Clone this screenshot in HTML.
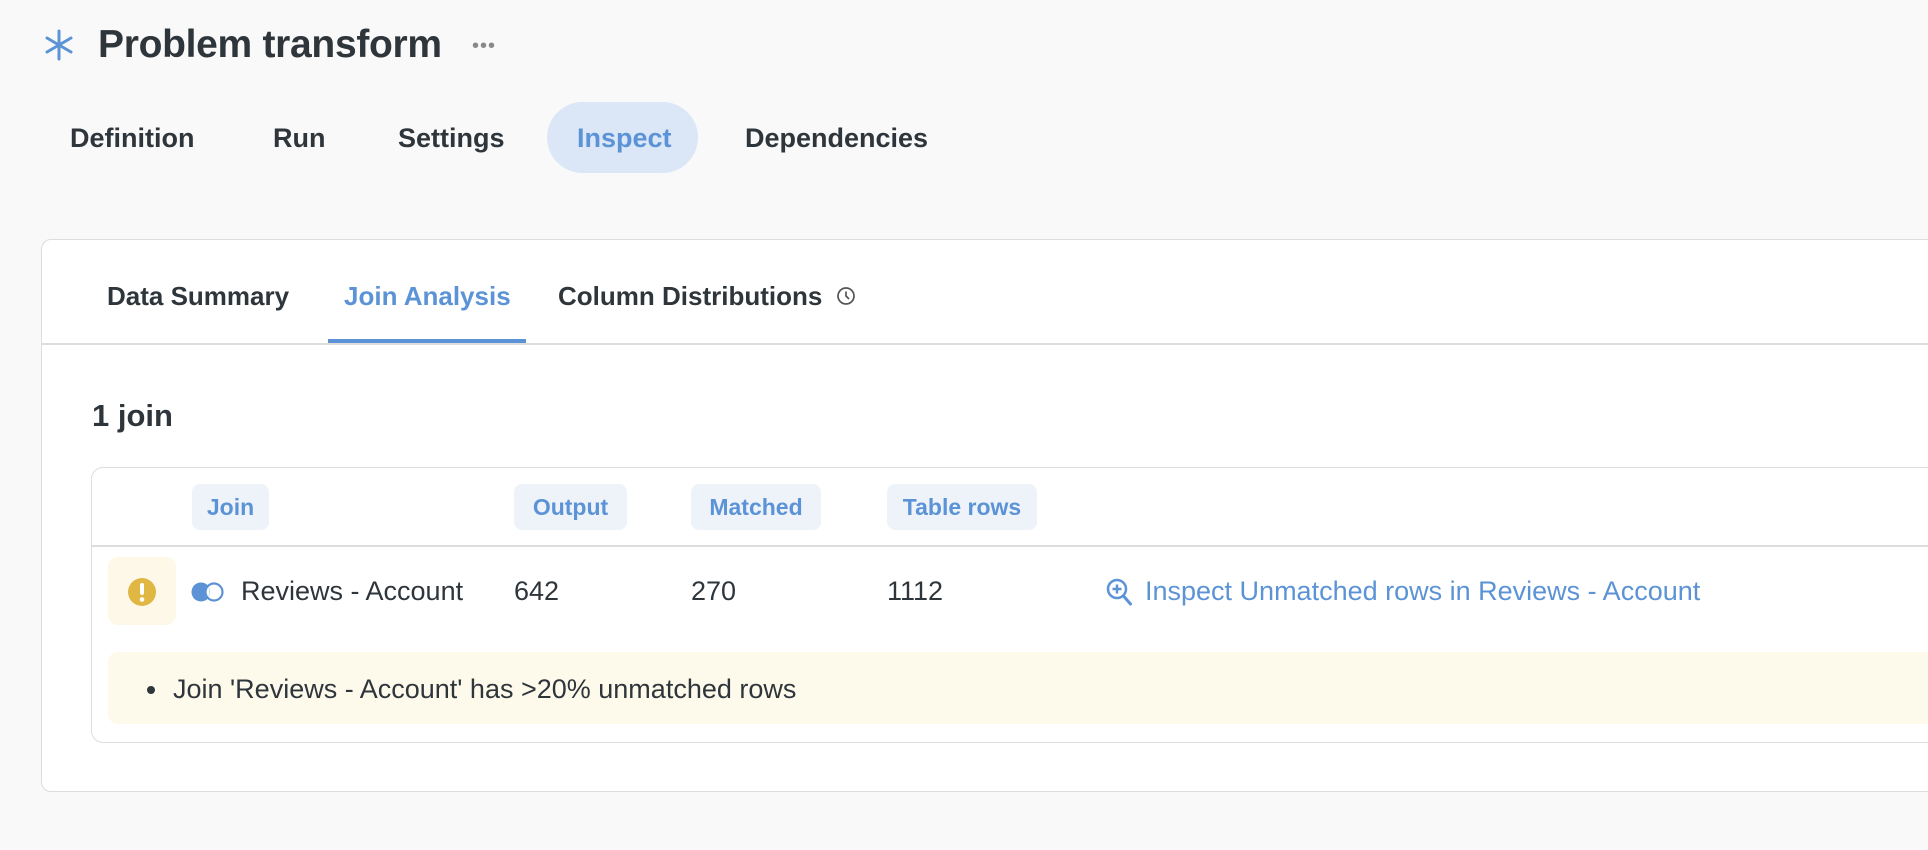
<!DOCTYPE html>
<html><head><meta charset="utf-8"><style>
*{box-sizing:border-box;margin:0;padding:0}
body{width:1928px;height:850px;overflow:hidden;background:#f9f9f9;font-family:"Liberation Sans",sans-serif;color:#2e353b;position:relative}
.a{position:absolute;white-space:nowrap}
.b{font-weight:bold}
.pill{position:absolute;background:#eef3fa;border-radius:8px;color:#5b93d6;font-weight:bold;font-size:23px;display:flex;align-items:center;justify-content:center}
</style></head><body>
<svg class="a" style="left:44px;top:29px" width="32" height="32" viewBox="0 0 32 32"><g stroke="#5b93d6" stroke-width="3" stroke-linecap="round"><line x1="15" y1="2" x2="15" y2="30"/><line x1="3" y1="9" x2="27" y2="23"/><line x1="3" y1="23" x2="27" y2="9"/></g></svg>
<div class="a b" style="left:98px;top:23px;font-size:39px;letter-spacing:-0.3px">Problem transform</div>
<div class="a" style="left:472px;top:35px;font-size:20px;color:#888;letter-spacing:1px">•••</div>
<style>.t{position:absolute;top:123px;font-size:27px;font-weight:bold}</style>
<div class="t" style="left:70px">Definition</div>
<div class="t" style="left:273px">Run</div>
<div class="t" style="left:398px">Settings</div>
<div class="a" style="left:547px;top:102px;width:151px;height:71px;border-radius:36px;background:#dbe7f7"></div>
<div class="t" style="left:577px;color:#5b93d6">Inspect</div>
<div class="t" style="left:745px">Dependencies</div>
<div class="a" style="left:41px;top:239px;width:1920px;height:553px;background:#fff;border:1.5px solid #ddd;border-radius:10px"></div>
<style>.s{position:absolute;top:281px;font-size:26px;font-weight:bold}</style>
<div class="s" style="left:107px">Data Summary</div>
<div class="s" style="left:344px;color:#5b93d6">Join Analysis</div>
<div class="s" style="left:558px">Column Distributions</div>
<svg class="a" style="left:836px;top:286px" width="20" height="20" viewBox="0 0 20 20"><circle cx="10" cy="10" r="8" fill="none" stroke="#555" stroke-width="1.7"/><path d="M10 5.5v4.5l3 3" fill="none" stroke="#555" stroke-width="1.7"/></svg>
<div class="a" style="left:42px;top:343px;width:1900px;height:2px;background:#ddd"></div>
<div class="a" style="left:328px;top:339px;width:198px;height:4px;background:#5b93d6"></div>
<div class="a b" style="left:92px;top:398px;font-size:31px">1 join</div>
<div class="a" style="left:91px;top:467px;width:1900px;height:276px;border:1.5px solid #ddd;border-radius:12px;background:#fff"></div>
<div class="pill" style="left:192px;top:484px;width:77px;height:46px">Join</div>
<div class="pill" style="left:514px;top:484px;width:113px;height:46px">Output</div>
<div class="pill" style="left:691px;top:484px;width:130px;height:46px">Matched</div>
<div class="pill" style="left:887px;top:484px;width:150px;height:46px">Table rows</div>
<div class="a" style="left:92px;top:545px;width:1900px;height:2px;background:#ddd"></div>
<div class="a" style="left:108px;top:557px;width:68px;height:68px;border-radius:10px;background:#fdf8e8"></div>
<svg class="a" style="left:127px;top:577px" width="30" height="30" viewBox="0 0 30 30"><circle cx="15" cy="15" r="14" fill="#e1b744"/><rect x="13" y="6" width="4" height="12" rx="2" fill="#fff"/><circle cx="15" cy="22.5" r="2.3" fill="#fff"/></svg>
<svg class="a" style="left:191px;top:581px" width="34" height="22" viewBox="0 0 34 22"><circle cx="10" cy="11" r="9.5" fill="#5b93d6"/><circle cx="23" cy="11" r="8.5" fill="#fff" stroke="#5b93d6" stroke-width="2.2"/><path d="M16.5 5a8.5 8.5 0 0 1 0 12a9.5 9.5 0 0 0 0-12z" fill="#5b93d6"/></svg>
<div class="a" style="left:241px;top:576px;font-size:27px">Reviews - Account</div>
<div class="a" style="left:514px;top:576px;font-size:27px">642</div>
<div class="a" style="left:691px;top:576px;font-size:27px">270</div>
<div class="a" style="left:887px;top:576px;font-size:27px">1112</div>
<svg class="a" style="left:1105px;top:577px" width="28" height="30" viewBox="0 0 28 30"><circle cx="12" cy="12" r="9" fill="none" stroke="#5b93d6" stroke-width="2.5"/><path d="M12 7.5v9M7.5 12h9" stroke="#5b93d6" stroke-width="2.5"/><path d="M18.5 19l7 8" stroke="#5b93d6" stroke-width="3" stroke-linecap="round"/></svg>
<div class="a" style="left:1145px;top:576px;font-size:27px;color:#5b93d6">Inspect Unmatched rows in Reviews - Account</div>
<div class="a" style="left:108px;top:652px;width:1880px;height:72px;border-radius:10px;background:#fdfaec"></div>
<div class="a" style="left:147px;top:686px;width:8px;height:8px;border-radius:50%;background:#2e353b"></div>
<div class="a" style="left:173px;top:674px;font-size:27px">Join 'Reviews - Account' has &gt;20% unmatched rows</div>
</body></html>
